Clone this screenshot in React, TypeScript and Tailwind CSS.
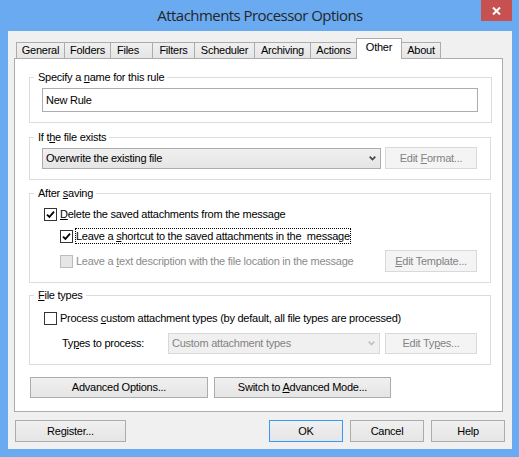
import clsx from "clsx";
import type { ReactNode } from "react";

// accelerator key letter
const Acc = ({ children }: { children: ReactNode }) => (
  <span className="underline decoration-1 underline-offset-[1px]">{children}</span>
);

const Button = ({
  children,
  className,
  disabled,
  primary,
}: {
  children: ReactNode;
  className?: string;
  disabled?: boolean;
  primary?: boolean;
}) => (
  <button
    type="button"
    className={clsx(
      "flex shrink-0 items-center justify-center border",
      disabled
        ? "border-[#d9d9d9] bg-[#f4f4f4] text-[#838383]"
        : "bg-gradient-to-b from-[#f0f0f0] to-[#e5e5e5] text-black",
      primary ? "border-[#3399ff]" : !disabled && "border-[#acacac]",
      className
    )}
  >
    <span className="whitespace-pre">{children}</span>
  </button>
);

const Check = ({ checked, disabled }: { checked?: boolean; disabled?: boolean }) => (
  <span
    className={clsx(
      "flex h-[13px] w-[13px] shrink-0 items-center justify-center border",
      disabled ? "border-[#bcbcbc] bg-[#e6e6e6]" : "border-[#333333] bg-white"
    )}
  >
    {checked && (
      <svg width="9" height="9" viewBox="0 0 9 9">
        <path d="M1 4.6 L3.4 7 L8 1.6" fill="none" stroke="#000" strokeWidth="1.8" />
      </svg>
    )}
  </span>
);

const Combo = ({
  text,
  disabled,
  className,
}: {
  text: string;
  disabled?: boolean;
  className?: string;
}) => (
  <div
    className={clsx(
      "flex items-center border pl-[3px] pr-[4px]",
      disabled
        ? "border-[#d9d9d9] bg-[#f0f0f0] text-[#838383]"
        : "border-[#acacac] bg-gradient-to-b from-[#f0f0f0] to-[#e5e5e5] text-black",
      className
    )}
  >
    <span className="flex-1 truncate">{text}</span>
    <svg width="7" height="5" viewBox="0 0 7 5">
      <path
        d="M0.7 0.7 L3.5 3.6 L6.3 0.7"
        fill="none"
        stroke={disabled ? "#c2c2c2" : "#3d4a3d"}
        strokeWidth="1.7"
      />
    </svg>
  </div>
);

const Group = ({ title, children }: { title: ReactNode; children: ReactNode }) => (
  <fieldset className="border border-[#dcdcdc] px-[4px] pb-[10px]">
    <legend className="pl-[4px] pr-[3px] leading-[13px]">{title}</legend>
    <div className="flex flex-col pl-[8px] pr-[9px]">{children}</div>
  </fieldset>
);

const tabs = [
  { name: "General", w: "w-[49px]" },
  { name: "Folders", w: "w-[47px]" },
  { name: "Files", w: "w-[43px] justify-start pl-[6px]" },
  { name: "Filters", w: "w-[43px]" },
  { name: "Scheduler", w: "w-[61px]" },
  { name: "Archiving", w: "w-[57px]" },
  { name: "Actions", w: "w-[47px]" },
  { name: "Other", w: "w-[46px]", active: true },
  { name: "About", w: "w-[40px]" },
];

export default function App() {
  return (
    <div className="flex h-[457px] w-[519px] flex-col bg-[#6aaaf1] pb-[8px] pl-[8px] pr-[7px] font-['Liberation_Sans',Arial,sans-serif] text-[11px] tracking-[-0.25px] text-black">
      {/* title bar */}
      <div className="relative flex h-[31px] shrink-0 items-center justify-center">
        <span className="font-['Open_Sans',sans-serif] text-[15px] tracking-[-0.55px] text-[#262626]">
          Attachments Processor Options
        </span>
        <div className="absolute right-0 top-0 flex h-[21px] w-[31px] items-center justify-center bg-[#c75050]">
          <svg width="9" height="8" viewBox="0 0 9 8">
            <path d="M1 0.5 L8 7.5 M8 0.5 L1 7.5" stroke="#fff" strokeWidth="2" />
          </svg>
        </div>
      </div>

      <div className="flex flex-1 flex-col bg-[#f0f0f0]">
        {/* tab strip */}
        <div className="relative z-10 -mb-px ml-[8px] mt-[7px] flex h-[21px] items-end">
          {tabs.map((t, i) => (
            <div
              key={t.name}
              className={clsx(
                "flex items-center justify-center border border-b-0 border-[#acacac]",
                t.w,
                i > 0 && "-ml-px",
                t.active
                  ? "relative z-10 h-[21px] bg-white pb-[3px]"
                  : "mb-px h-[16px] bg-gradient-to-b from-[#f0f0f0] to-[#e5e5e5]"
              )}
            >
              {t.name}
            </div>
          ))}
        </div>

        {/* tab page */}
        <div className="ml-[6px] mr-[9px] flex flex-col border border-[#acacac] bg-white pb-[13px] pl-[14px] pr-[11px] pt-[12px]">
          <Group
            title={
              <>
                Specify a <Acc>n</Acc>ame for this rule
              </>
            }
          >
            <div className="mt-[4px] flex h-[24px] w-[436px] items-center border border-[#abadb3] pl-[3px]">
              New Rule
            </div>
          </Group>

          <div className="mt-[8px]">
            <Group
              title={
                <>
                  If t<Acc>h</Acc>e file exists
                </>
              }
            >
              <div className="mt-[3px] flex h-[22px] items-center gap-[4px]">
                <Combo text="Overwrite the existing file" className="h-[21px] w-[339px]" />
                <Button disabled className="h-[22px] w-[92px]">
                  Edit <Acc>F</Acc>ormat...
                </Button>
              </div>
            </Group>
          </div>

          <div className="mt-[7px]">
            <Group
              title={
                <>
                  After <Acc>s</Acc>aving
                </>
              }
            >
              <div className="ml-[2px] mt-[6px] flex h-[16px] items-center gap-[3px]">
                <Check checked />
                <span>
                  <Acc>D</Acc>elete the saved attachments from the message
                </span>
              </div>
              <div className="ml-[18px] mt-[6px] flex h-[16px] items-center gap-[2px]">
                <Check checked />
                <span className="whitespace-pre border border-dotted border-black leading-[14px]">
                  Leave a <Acc>s</Acc>hortcut to the saved attachments in the  message
                </span>
              </div>
              <div className="ml-[18px] mt-[6px] flex h-[22px] items-center gap-[3px]">
                <Check disabled />
                <span className="text-[#8b8b8b]">
                  Leave a <Acc>t</Acc>ext description with the file location in the message
                </span>
                <Button disabled className="ml-auto h-[22px] w-[92px]">
                  <Acc>E</Acc>dit Template...
                </Button>
              </div>
            </Group>
          </div>

          <div className="mt-[6px]">
            <Group
              title={
                <>
                  <Acc>F</Acc>ile types
                </>
              }
            >
              <div className="ml-[2px] mt-[8px] flex h-[16px] items-center gap-[3px]">
                <Check />
                <span>
                  Process <Acc>c</Acc>ustom attachment types (by default, all file types are processed)
                </span>
              </div>
              <div className="mt-[6px] flex h-[22px] items-center">
                <span className="ml-[20px] w-[106px]">
                  Ty<Acc>p</Acc>es to process:
                </span>
                <Combo disabled text="Custom attachment types" className="h-[21px] w-[212px]" />
                <Button disabled className="ml-auto h-[21px] w-[92px]">
                  Edit Ty<Acc>p</Acc>es...
                </Button>
              </div>
            </Group>
          </div>

          <div className="ml-[1px] mt-[12px] flex gap-[6px]">
            <Button className="h-[21px] w-[178px]">Advanced Options...</Button>
            <Button className="h-[21px] w-[177px]">
              Switch to <Acc>A</Acc>dvanced Mode...
            </Button>
          </div>
        </div>

        {/* dialog buttons */}
        <div className="mt-[8px] flex px-[7px]">
          <Button className="h-[22px] w-[111px]">Register...</Button>
          <div className="ml-auto flex gap-[7px]">
            <Button primary className="h-[22px] w-[74px]">
              OK
            </Button>
            <Button className="h-[22px] w-[74px]">Cancel</Button>
            <Button className="h-[22px] w-[74px]">Help</Button>
          </div>
        </div>
      </div>
    </div>
  );
}
